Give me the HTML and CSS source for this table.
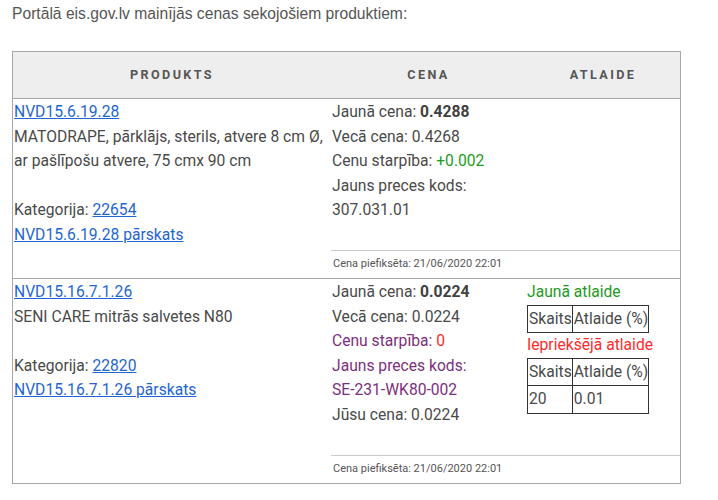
FILE: index.html
```html
<!DOCTYPE html>
<html>
<head>
<meta charset="utf-8">
<link rel="stylesheet" href="styles.css">
</head>
<body>
<div class="page">
  <p class="intro">Portālā eis.gov.lv mainījās cenas sekojošiem produktiem:</p>
  <div class="tbl">
    <div class="head">
      <div class="h">PRODUKTS</div>
      <div class="h">CENA</div>
      <div class="h">ATLAIDE</div>
    </div>
    <div class="row">
      <div class="prod">
        <a href="#">NVD15.6.19.28</a><br>
        MATODRAPE, pārklājs, sterils, atvere 8 cm Ø,<br>
        ar pašlīpošu atvere, 75 cmx 90 cm<br>
        <br>
        Kategorija: <a href="#">22654</a><br>
        <a href="#">NVD15.6.19.28 pārskats</a>
      </div>
      <div class="right">
        <div class="top">
          <div class="cena">
            Jaunā cena: <b>0.4288</b><br>
            Vecā cena: 0.4268<br>
            Cenu starpība: <span class="green">+0.002</span><br>
            Jauns preces kods:<br>
            307.031.01
          </div>
          <div class="atl"></div>
        </div>
        <div class="foot">Cena piefiksēta: 21/06/2020 22:01</div>
      </div>
    </div>
    <div class="row">
      <div class="prod">
        <a href="#">NVD15.16.7.1.26</a><br>
        SENI CARE mitrās salvetes N80<br>
        <br>
        Kategorija: <a href="#">22820</a><br>
        <a href="#">NVD15.16.7.1.26 pārskats</a>
      </div>
      <div class="right">
        <div class="top">
          <div class="cena">
            Jaunā cena: <b>0.0224</b><br>
            Vecā cena: 0.0224<br>
            <span class="purple">Cenu starpība: </span><span class="red">0</span><br>
            <span class="purple">Jauns preces kods:</span><br>
            <span class="purple">SE-231-WK80-002</span><br>
            Jūsu cena: 0.0224
          </div>
          <div class="atl">
            <div class="green">Jaunā atlaide</div>
            <table class="dt">
              <tr><td>Skaits</td><td>Atlaide (%)</td></tr>
            </table>
            <div class="red">Iepriekšējā atlaide</div>
            <table class="dt">
              <tr><td>Skaits</td><td>Atlaide (%)</td></tr>
              <tr><td>20</td><td>0.01</td></tr>
            </table>
          </div>
        </div>
        <div class="foot">Cena piefiksēta: 21/06/2020 22:01</div>
      </div>
    </div>
  </div>
</div>
</body>
</html>
```

FILE: styles.css
```css
body {
  margin: 0;
  background: #fff;
}
.page {
  padding: 4px 12px;
}
.intro {
  margin: 0;
  font-family: "Liberation Sans", Arial, sans-serif;
  font-size: 15.65px;
  line-height: 20px;
  color: #555;
}
.tbl {
  margin-top: 27px;
  width: 667px;
  border: 1px solid #a8a8a8;
  font-family: Roboto, sans-serif;
  font-size: 15.65px;
  line-height: 24.6px;
  color: #4a4a4a;
}
.head {
  display: grid;
  grid-template-columns: 318px 195px 1fr;
  background: #eeeeee;
  height: 46px;
  border-bottom: 1px solid #a8a8a8;
}
.h {
  display: flex;
  align-items: center;
  justify-content: center;
  font-size: 12.6px;
  font-weight: bold;
  letter-spacing: 2.4px;
  color: #555;
}
.row {
  display: grid;
  grid-template-columns: 318px 1fr;
}
.row + .row {
  border-top: 1px solid #a8a8a8;
}
.prod {
  padding: 1px 1px 0;
}
a {
  color: #1f66d1;
  text-decoration: underline;
}
b {
  font-weight: bold;
  color: #404040;
}
.right {
  display: flex;
  flex-direction: column;
}
.top {
  display: grid;
  grid-template-columns: 195px 1fr;
  padding-top: 1px;
  padding-bottom: 27px;
}
.cena {
  padding: 0 1px;
}
.atl {
  padding: 0 1px;
}
.foot {
  flex-shrink: 0;
  border-top: 1px solid #cccccc;
  height: 27px;
  display: flex;
  align-items: center;
  padding: 0 2px;
  font-size: 11px;
  color: #555;
}
.green { color: #1e9a1e; }
.red { color: #ff2a2a; }
.purple { color: #7d2f7d; }
.dt {
  border-collapse: collapse;
  font-size: 15.65px;
  color: #4a4a4a;
}
.dt td {
  border: 1px solid #333;
  padding: 1px 0 1px 1px;
  line-height: 24.6px;
}
```
